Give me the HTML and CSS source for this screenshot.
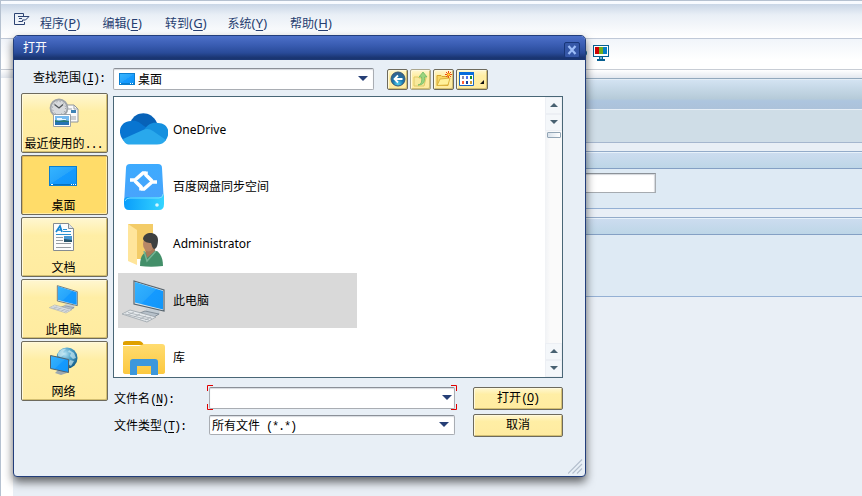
FILE: index.html
```
<!DOCTYPE html>
<html lang="zh-CN">
<head>
    <meta charset="UTF-8">
    <meta name="viewport" content="width=device-width, initial-scale=1.0">
    <title>打开</title>
    <link rel="stylesheet" href="styles.css">
</head>
<body>
    <!-- shared icons -->
    <svg class="defs" width="0" height="0">
        <defs>
            <linearGradient id="screen" x1="0" y1="0" x2="1" y2="1">
                <stop offset="0" stop-color="#35b4ff"/>
                <stop offset=".5" stop-color="#27a5fb"/>
                <stop offset=".52" stop-color="#159aff"/>
                <stop offset="1" stop-color="#1196f8"/>
            </linearGradient>
            <linearGradient id="folder" x1="0" y1="0" x2="0" y2="1">
                <stop offset="0" stop-color="#ffdc70"/>
                <stop offset="1" stop-color="#fcc83f"/>
            </linearGradient>
            <linearGradient id="drive" x1="0" y1="0" x2="0" y2="1">
                <stop offset="0" stop-color="#3dabff"/>
                <stop offset="1" stop-color="#4aa2fb"/>
            </linearGradient>
            <linearGradient id="driveBase">
                <stop offset="0" stop-color="#0a9dfb"/>
                <stop offset="1" stop-color="#35d5ff"/>
            </linearGradient>
            <radialGradient id="globe" cx=".4" cy=".3" r=".7">
                <stop offset="0" stop-color="#b7e4f5"/>
                <stop offset=".5" stop-color="#4b9fc6"/>
                <stop offset="1" stop-color="#155f8b"/>
            </radialGradient>
            <radialGradient id="ball" cx=".5" cy=".85" r=".8">
                <stop offset="0" stop-color="#52d0f0"/>
                <stop offset=".5" stop-color="#1674ac"/>
                <stop offset="1" stop-color="#37618d"/>
            </radialGradient>
        </defs>
        <symbol id="computer" viewBox="0 0 48 48">
            <path d="M22 31l4 1v4l10 3 4-2-1-4" fill="#c2ccd4"/>
            <path d="M20 36l5-2 14 3-5 3z" fill="#b7c1ca" stroke="#6d7a85" stroke-width=".7"/>
            <path d="M14 4L44 13V34L14 27z" fill="#dce5eb" stroke="#56646e" stroke-width="1.200"/>
            <path d="M15 5L43 14V32.500L15 25.500z" fill="url(#screen)"/>
            <path d="M2 37l8-4 26 7-9 5z" fill="#e6eaed" stroke="#9aa3aa" stroke-width=".8"/>
            <path d="M5 37l24 6M8 35.500l24 6M8 38l6-3M14 40l6-3M20 42l6-3M25 43l6-3" stroke="#a4acb3" stroke-width=".8" fill="none"/>
        </symbol>
        <symbol id="desktop" viewBox="0 0 28 20">
            <path d="M0 0h28v20H0z" fill="#0b7fd0"/>
            <path d="M1 1h26v17H1z" fill="url(#screen)"/>
            <path d="M1 18h26v1H1z" fill="#0872bf"/>
            <path d="M2 18h2v1H2zM22 18h1v1h-1zM24 18h1v1h-1zM26 18h1v1h-1z" fill="#fff"/>
        </symbol>
    </svg>

    <div class="app">
        <nav class="menubar">
            <svg class="menu-icon" width="16" height="13" viewBox="0 0 16 13">
                <path d="M9.500 3.500V.5H.5v11h10V9M4 3.500h11L11.500 7H8.500v1.500H4.500M5 5.500h3" fill="none" stroke="#2c4373"/>
            </svg>
            <span>程序<em>(<u>P</u>)</em></span>
            <span>编辑<em>(<u>E</u>)</em></span>
            <span>转到<em>(<u>G</u>)</em></span>
            <span>系统<em>(<u>Y</u>)</em></span>
            <span>帮助<em>(<u>H</u>)</em></span>
        </nav>
        <div class="toolbar">
            <svg width="24" height="16" viewBox="0 0 24 16">
                <circle cx="-1" cy="8" r="3" fill="#075f91"/>
                <path d="M8 0h16v12H8z" fill="#075f91"/>
                <path d="M9 1h14v10H9z" fill="#fff"/>
                <path d="M10 2h4v7h-4z" fill="#cf0000"/>
                <path d="M14 2h4v7h-4z" fill="#73ae1c"/>
                <path d="M18 2h4v7h-4z" fill="#087fc5"/>
                <path d="M14 12h4v2h2v2h-8v-2h2z" fill="#075f91"/>
                <path d="M15 12h2v2h-2z" fill="#75b4d2"/>
            </svg>
        </div>
        <div class="toolbar-edge"></div>
        <main class="screen">
            <div class="screen-title"></div>
            <div class="screen-tools"></div>
            <section class="group group-input">
                <div class="group-head"></div>
                <div class="group-body"><div class="field"></div></div>
            </section>
            <section class="group group-large">
                <div class="group-head"></div>
                <div class="group-body"></div>
            </section>
        </main>
    </div>

    <div class="dialog">
        <div class="titlebar">
            <span>打开</span>
            <div class="close">
                <svg width="10" height="10" viewBox="0 0 10 10"><path d="M1.500 1l7 8M8.500 1l-7 8" stroke="#9dbdf8" stroke-width="2.200"/></svg>
            </div>
        </div>
        <div class="dialog-body">
            <div class="lookin">
                <span class="label">查找范围<i>(<u>I</u>):</i></span>
                <div class="combo combo-lookin">
                    <svg width="16" height="12" viewBox="0 0 16 12">
                        <path d="M0 0h16v12H0z" fill="#0b7fd0"/>
                        <path d="M1 1h14v9H1z" fill="url(#screen)"/>
                        <path d="M1 10h1v1H1zM11 10h1v1h-1zM13 10h1v1h-1z" fill="#fff"/>
                    </svg>
                    <span>桌面</span>
                    <b class="arrow"></b>
                </div>
                <div class="nav-buttons">
                    <div class="btn tool">
                        <svg width="16" height="16" viewBox="0 0 16 16">
                            <circle cx="8" cy="8" r="7" fill="url(#ball)" stroke="#385773"/>
                            <path d="M12.500 8H5M8 4.500L4.500 8 8 11.500" fill="none" stroke="#fff" stroke-width="1.800"/>
                        </svg>
                    </div>
                    <div class="btn tool disabled">
                        <svg width="16" height="16" viewBox="0 0 16 16">
                            <path d="M1 15V6h4l1 1h7l-2 8z" fill="#f8e99c" stroke="#dfc966"/>
                            <path d="M5 14c4-1 4-4 3.500-8H6l4-5 4 5h-2.500c.5 5-1 8-6.500 8z" fill="#9bd57f" stroke="#70b765" stroke-width=".8"/>
                        </svg>
                    </div>
                    <div class="btn tool">
                        <svg width="16" height="16" viewBox="0 0 16 16">
                            <path d="M1 14.500v-10h4l1 1h6v9z" fill="#f8d766" stroke="#d7a72f"/>
                            <path d="M1 14.500L4 8l10-1-2 7z" fill="#fff09a" stroke="#dcb33d"/>
                            <path d="M12.500 0v7M9 3.500h7M10 1l5 5M15 1l-5 5" stroke="#ed4b16"/>
                            <circle cx="12.500" cy="3.500" r="1.300" fill="#ffe02f"/>
                        </svg>
                    </div>
                    <div class="btn tool view">
                        <svg width="26" height="16" viewBox="0 0 26 16">
                            <path d="M.5 1.500h14v13H.5z" fill="#fff" stroke="#1766c4"/>
                            <path d="M0 1h15v3H0z" fill="#086bdc"/>
                            <path d="M3 5h2v3H3z" fill="#8b8aac"/><path d="M7 5h2v3H7z" fill="#5272ed"/><path d="M11 5h2v3h-2z" fill="#168c2c"/>
                            <path d="M3 10h2v3H3z" fill="#ff5a36"/><path d="M7 10h2v3H7z" fill="#143e9b"/><path d="M11 10h2v3h-2z" fill="#c99b32"/>
                            <path d="M25 9v4h-4z" fill="#111"/>
                        </svg>
                    </div>
                </div>
            </div>

            <div class="content">
                <div class="places">
                    <div class="btn place">
                        <svg width="32" height="32" viewBox="0 0 32 32">
                            <path d="M17 8h9l4 4v13H17z" fill="#fafafa" stroke="#8f9599"/>
                            <path d="M26 8v4h4M19 12h5M19 18h3M19 20h9M19 22h9" fill="none" stroke="#9ba1a8"/>
                            <path d="M23 13h5v3h-5z" fill="#3e83b5"/>
                            <circle cx="11" cy="11" r="8.500" fill="#d8dadd" stroke="#a0a4a9" stroke-width="1.800"/>
                            <circle cx="11" cy="11" r="6.500" fill="none" stroke="#8d9298" stroke-dasharray="1 2.400"/>
                            <path d="M6.500 7.500L11 11l4-3.500" fill="none" stroke="#4e5358" stroke-width="1.300"/>
                            <path d="M5.500 17.500h17v12h-17z" fill="#fff" stroke="#9ba2a8"/>
                            <path d="M7 19h14v9H7z" fill="#77b9ee"/>
                            <path d="M7 23l4 1 5-1 5 1v1H7z" fill="#257a75"/>
                            <path d="M7 25h14v3H7z" fill="#2573b4"/>
                            <path d="M9 21h5v1h4v1H9z" fill="#e8f7ff"/>
                        </svg>
                        <span>最近使用的<i>...</i></span>
                    </div>
                    <div class="btn place selected">
                        <svg width="32" height="32" viewBox="0 0 32 32"><use href="#desktop" x="1" y="7" width="28" height="20"/></svg>
                        <span>桌面</span>
                    </div>
                    <div class="btn place">
                        <svg width="32" height="32" viewBox="0 0 32 32">
                            <path d="M5.500 2.500h15l5 5v22h-20z" fill="#fcfcfc" stroke="#858c92"/>
                            <path d="M20.500 2.500v5h5" fill="#dfe5ea" stroke="#858c92"/>
                            <path d="M8 11l4-6 2 6M10 9h4" fill="none" stroke="#1785d1" stroke-width="1.700"/>
                            <path d="M15 8.500h4M15 10.500h8M8 13.500h15" stroke="#2990cf"/>
                            <path d="M8 16.500h7M8 19.500h7M8 22.500h15M8 26.500h15" stroke="#979da2"/>
                            <path d="M16 15h8v6h-8z" fill="#4797d1"/><path d="M16 18l8 1v2h-8z" fill="#27536a"/>
                        </svg>
                        <span>文档</span>
                    </div>
                    <div class="btn place">
                        <svg width="32" height="32"><use href="#computer" width="32" height="32"/></svg>
                        <span>此电脑</span>
                    </div>
                    <div class="btn place">
                        <svg width="32" height="32" viewBox="0 0 32 32">
                            <circle cx="19" cy="13" r="10.500" fill="url(#globe)"/>
                            <path d="M10 8c3-4 6-5 8-4l-3 3 2 2-4 3-3-1zM21 5l5 3 2 5-3 1-3-3 1-3-3-1zM22 15l4 1-3 5-3-2z" fill="#d0edf5" opacity=".65"/>
                            <path d="M11 24l5 1 3 3-6 2-6-2z" fill="#9ca9b2"/>
                            <path d="M2.500 10.500l18 4v13l-18-4z" fill="url(#screen)" stroke="#52636e"/>
                        </svg>
                        <span>网络</span>
                    </div>
                </div>

                <div class="main-column">
                    <div class="listbox">
                        <div class="items">
                            <div class="item">
                                <svg width="48" height="48" viewBox="0 0 48 48">
                                    <path d="M11 15C16 5 31 4 37 17l-4 8-22-3z" fill="#0762b8"/>
                                    <path d="M3 34C-4 24 2 15 11 15c6-1 9 2 13 5l5 3L4 35z" fill="#0875d1"/>
                                    <path d="M24 24c4-6 8-8 14-7 11 0 13 11 7 18L29 29z" fill="#1590df"/>
                                    <path d="M3 33l20-9c4-2 7-1 10 1l13 9c-2 3-5 4.500-9 4.500H10c-4 0-6-2-7-5.500z" fill="#29a8ec"/>
                                </svg>
                                <span>OneDrive</span>
                            </div>
                            <div class="item cjk">
                                <svg width="48" height="48" viewBox="0 0 48 48">
                                    <path d="M6 5q0-4 4-4h28q4 0 4 4l2 36H4z" fill="url(#drive)"/>
                                    <path d="M4 38q0-4 4-4h32q4 0 4-4v11q0 6-5 6H9q-5 0-5-6z" fill="url(#driveBase)"/>
                                    <path d="M5 38q1-3 5-3h29q4 0 4-4" fill="none" stroke="#7ddcff"/>
                                    <circle cx="37" cy="42" r="1.800" fill="#d7f7ff"/>
                                    <path d="M10 17h5l8-7h3M37 19h-5l-8 7h-3M15 18l6 6v3.500M32 18l-6-6V8.500" fill="none" stroke="#fff" stroke-width="3.600"/>
                                </svg>
                                <span>百度网盘同步空间</span>
                            </div>
                            <div class="item">
                                <svg width="48" height="48" viewBox="0 0 48 48">
                                    <path d="M8 4h25v35H8z" fill="#f3cc68"/>
                                    <path d="M8 4l9 6v35L8 41z" fill="#ffe59b"/>
                                    <path d="M20 46c0-10 3-14 10-15h7c4 3 6 8 6 15-8 1-16 1-23 0z" fill="#438f69"/>
                                    <path d="M25 29l2 9 8-7v-5z" fill="#a87958"/>
                                    <ellipse cx="28.500" cy="24" rx="5.500" ry="7.500" fill="#b78767"/>
                                    <path d="M23 19c1-8 15-8 15 1 0 4-1 9-4 9-2-1-2-4-3-6-3 0-7-1-8-4z" fill="#3e4040"/>
                                    <path d="M24 31l3 10 9-10" fill="none" stroke="#76b394" stroke-width="1.500"/>
                                </svg>
                                <span>Administrator</span>
                            </div>
                            <div class="item cjk active">
                                <svg width="48" height="48"><use href="#computer" width="48" height="48"/></svg>
                                <span>此电脑</span>
                            </div>
                            <div class="item cjk">
                                <svg width="48" height="48" viewBox="0 0 48 48">
                                    <path d="M3 9q0-2 3-2h13q3 0 5 4H3z" fill="#dfa000"/>
                                    <path d="M3 12h16l5-2h18q3 0 3 3v25q0 2-3 2H6q-3 0-3-2z" fill="url(#folder)"/>
                                    <path d="M10 42V28q0-3 3-3h22q3 0 3 3v14h-7V32H17v10z" fill="#3c97dc"/>
                                </svg>
                                <span>库</span>
                            </div>
                        </div>
                        <div class="scrollbar">
                            <div class="step"><b class="tri up"></b></div>
                            <div class="step"><b class="tri"></b></div>
                            <div class="thumb"></div>
                            <div class="track"></div>
                            <div class="step"><b class="tri up"></b></div>
                            <div class="step"><b class="tri"></b></div>
                        </div>
                    </div>

                    <div class="form">
                        <div class="fields">
                            <span class="label">文件名<i>(<u>N</u>):</i></span>
                            <div class="combo focused">
                                <b class="arrow"></b>
                                <svg class="focus" width="250" height="25" viewBox="0 0 250 25">
                                    <path d="M.5 6V.5H6M.5 19v5.500H6M244 .5h5.500V6M244 24.500h5.500V19" fill="none" stroke="#e00000"/>
                                </svg>
                            </div>
                            <span class="label">文件类型<i>(<u>T</u>):</i></span>
                            <div class="combo combo-type"><span>所有文件<i> (*.*)</i></span><b class="arrow"></b></div>
                        </div>
                        <div class="actions">
                            <div class="btn action">打开<i>(<u>O</u>)</i></div>
                            <div class="btn action">取消</div>
                        </div>
                    </div>
                </div>
            </div>
        </div>
        <svg class="grip" width="15" height="15" viewBox="0 0 15 15">
            <path d="M0 14.500L14 .5M4.500 14.500l9.500-9.500M9 14.500l5-5" stroke="#b4bfcd" stroke-width="1.100"/>
        </svg>
    </div>
</body>
</html>
```

FILE: styles.css
```
* {
    box-sizing: border-box;
}
body {
    margin: 0;
    height: 496px;
    overflow: hidden;
    position: relative;
    background-color: #e9eff6;
    font-family: "Noto Sans", "Noto Sans CJK SC", sans-serif;
    font-size: 12px;
    color: #000;
}
svg {
    display: block;
    flex: none;
}
/* half-width characters, 6px each */
i {
    font-family: "Liberation Mono", monospace;
    font-size: 12px;
    font-style: normal;
    letter-spacing: -1.2px;
    white-space: pre;
}
u {
    text-underline-offset: 2px;
}
.defs {
    position: absolute;
}

/* main window */
.app {
    height: 496px;
    display: flex;
    flex-direction: column;
    border-left: 1px solid #b5c1d0;
    background-color: #fff;
}
.menubar {
    height: 39px;
    display: flex;
    align-items: center;
    padding: 7px 0 0 13px;
    border-top: 1px solid #b5c1d0;
    border-bottom: 1px solid #c0c9d8;
    box-shadow: inset 0 3px #f8fbff;
    background: linear-gradient(#c9d6e6 3px, #e9eff6 14px, #fff 36px);
    color: #263e70;
}
.menubar span {
    width: 62.5px;
    white-space: nowrap;
}
.menubar em {
    font-size: 13px;
    font-style: normal;
    letter-spacing: 0.2px;
}
.menu-icon {
    margin: -7px 10px 0 0;
}
.toolbar {
    height: 31px;
    padding: 6px 0 0 584px;
    border-bottom: 1px solid #c8cdd5;
    background: linear-gradient(#f1f5fa, #fff 70%);
}
.toolbar-edge {
    height: 8px;
    background: linear-gradient(#fff, #e3e8ef);
}
.screen {
    flex: 1;
    margin-left: 12px;
    border-top: 1px solid #93a9bd;
    background-color: #e9eff6;
}
.screen-title {
    height: 31px;
    border-top: 1px solid #e3edf6;
    border-bottom: 1px solid #e6eef6;
    background: linear-gradient(#d3e3f2, #b6cbd9 64%, #adc5df 72%, #acc2da);
}
.screen-tools {
    height: 33px;
    border-bottom: 1px solid #a5b6ce;
    background-color: #cfdde7;
}
.group {
    margin-top: 8px;
    border-top: 1px solid #93abc9;
    border-bottom: 1px solid #94b0d4;
    background-color: #deeaf4;
}
.group-head {
    height: 17px;
    border-top: 1px solid #e7f1fa;
    border-bottom: 1px solid #84a0c4;
    background: linear-gradient(#ccdcef, #bdd6e7);
}
.group-input .group-body {
    height: 39px;
    padding: 4px 0 0 400px;
}
.group-large .group-body {
    height: 61px;
}
.field {
    width: 243px;
    height: 20px;
    border: 1px solid #a6abb0;
    border-top-color: #8c9299;
    box-shadow: inset -1px 1px 1px #d4d7dc;
    background-color: #fff;
}

/* dialog window */
.dialog {
    position: absolute;
    left: 13px;
    top: 35px;
    width: 573px;
    height: 442px;
    border: 1px solid #223e7b;
    border-radius: 5px 5px 4px 4px;
    background-color: #e8eff6;
    box-shadow: 0 5px 10px rgba(0, 0, 0, 0.6);
}
.titlebar {
    height: 24px;
    display: flex;
    justify-content: space-between;
    align-items: center;
    padding: 0 5px 0 9px;
    border-radius: 4px 4px 0 0;
    background: linear-gradient(#4d70c8, #3b5eb4 35%, #294b99 70%, #19346f 92%, #1d3977);
    color: #fff;
}
.titlebar span {
    margin-top: -2px;
}
.close {
    width: 16px;
    height: 16px;
    margin-top: 4px;
    display: flex;
    align-items: center;
    justify-content: center;
    border: 1px solid #183678;
    border-radius: 2px;
    background-color: #3557a7;
}
.dialog-body {
    padding: 8px 22px 0 7px;
}
.lookin {
    height: 22px;
    display: flex;
    align-items: center;
}
.lookin .label {
    width: 92px;
    padding: 0 0 4px 12px;
}
.label {
    white-space: nowrap;
}
.combo {
    position: relative;
    display: flex;
    align-items: center;
    padding: 0 5px 0 2px;
    border: 1px solid #a9adb3;
    border-top-color: #8b9098;
    border-radius: 2px;
    box-shadow: inset 0 1px 1px #d8dbe0;
    background-color: #fff;
}
.combo span {
    margin-top: -1px;
}
.combo-lookin {
    width: 261px;
    height: 22px;
    padding-left: 5px;
    gap: 3px;
}
.arrow {
    margin-left: auto;
    margin-top: -2px;
    border: 5px solid transparent;
    border-top-color: #263f76;
    border-bottom: 0;
}
.nav-buttons {
    display: flex;
    gap: 2px;
    margin-left: 13px;
}
.btn {
    border: 1px solid #6d6a5d;
    border-radius: 2px;
    box-shadow: inset 1px 1px #fff9dc, inset -1px -1px #d3bf72;
    background: linear-gradient(#fff7d1, #ffeea5 30%, #ffeba0);
}
.tool {
    width: 21px;
    height: 21px;
    display: flex;
    align-items: center;
    justify-content: center;
}
.tool.disabled {
    border-color: #aaa68e;
}
.tool.view {
    width: 32px;
}
.content {
    display: flex;
    gap: 5px;
    margin-top: 3px;
}
.places {
    width: 87px;
    display: flex;
    flex-direction: column;
    gap: 2px;
}
.place {
    height: 60px;
    display: flex;
    flex-direction: column;
    align-items: center;
    padding: 3px 2px 0 0;
    white-space: nowrap;
}
.place span {
    margin-top: 7px;
    line-height: 16px;
}
.place.selected {
    box-shadow: inset 1px 1px #dbb75b, inset -1px -1px #ffedaa;
    background: #ffdc69;
}
.main-column {
    flex: 1;
    padding-top: 3px;
}
.listbox {
    height: 282px;
    display: flex;
    overflow: hidden;
    border: 1px solid #496676;
    background-color: #fff;
}
.items {
    flex: 1;
    display: flex;
    flex-direction: column;
    gap: 2px;
    margin-bottom: 2px;
    padding: 5px 0 0 4px;
    overflow: hidden;
}
.item {
    width: 239px;
    height: 55px;
    flex: none;
    display: flex;
    align-items: center;
    gap: 5px;
    padding-left: 2px;
}
.item.cjk span {
    margin-top: -2px;
}
.item.active {
    background-color: #d9d9d9;
}
.scrollbar {
    width: 17px;
    display: flex;
    flex-direction: column;
    background: linear-gradient(90deg, #f0f2f5, #fafafa 30%);
}
.step {
    height: 17px;
    display: flex;
    align-items: center;
    justify-content: center;
    padding-bottom: 2px;
    border: 1px solid #eceff4;
    background-color: #f4f7fa;
}
.tri {
    border: 4px solid transparent;
    border-top-color: #486171;
    border-bottom: 0;
}
.tri.up {
    border-top: 0;
    border-bottom: 4px solid #486171;
}
.thumb {
    height: 6px;
    margin: 1px 1px 0 2px;
    border: 1px solid #92a5b5;
    border-radius: 1px;
    background: linear-gradient(90deg, #dae3ec, #fff);
}
.track {
    flex: 1;
}

/* file name and type */
.form {
    display: flex;
    justify-content: space-between;
    padding-top: 9px;
}
.fields {
    display: grid;
    grid-template-columns: 95px 246px;
    grid-template-rows: 22px 20px;
    row-gap: 6px;
    align-items: center;
    padding-left: 1px;
}
.fields .combo {
    height: 100%;
}
.focused {
    padding-right: 2px;
}
.focus {
    position: absolute;
    left: -3px;
    top: -3px;
}
.actions {
    display: flex;
    flex-direction: column;
    gap: 4px;
}
.action {
    width: 90px;
    height: 23px;
    line-height: 20px;
    text-align: center;
}
.grip {
    position: absolute;
    right: 2px;
    bottom: 2px;
}
```
